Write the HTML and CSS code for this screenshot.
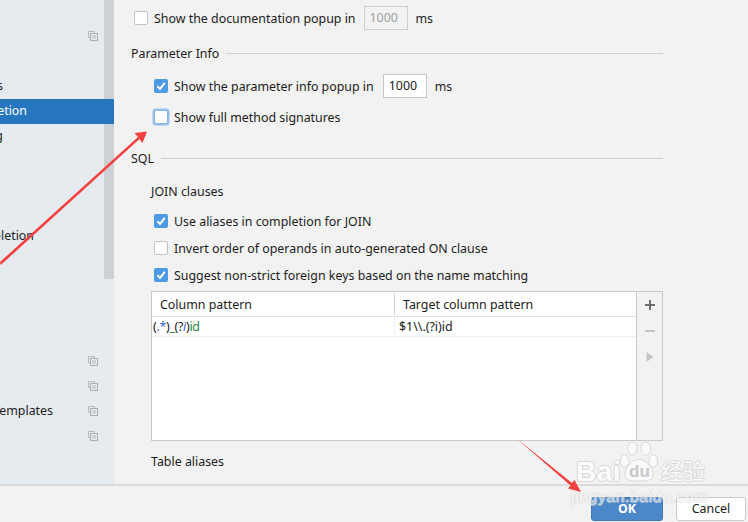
FILE: index.html
```html
<!DOCTYPE html>
<html lang="en">
<head>
<meta charset="utf-8">
<title>Settings</title>
<link rel="stylesheet" href="styles.css">
</head>
<body>
<svg width="0" height="0" class="defs">
  <symbol id="copy" viewBox="0 0 10 10">
    <path d="M.5.5h6v2M.5.5v6h2" fill="none" stroke="#b4b9bd"/>
    <rect x="2.500" y="2.500" width="7" height="7" fill="none" stroke="#a9aeb3"/>
    <path d="M4 5h4M4 7h4" stroke="#b4b9bd"/>
  </symbol>
  <symbol id="tick" viewBox="0 0 14 14">
    <path d="M3.400 7.200 6 9.900 10.800 3.900" fill="none" stroke="#fff" stroke-width="2"/>
  </symbol>
</svg>
<div class="app">
  <div class="main">
    <aside class="sidebar">
      <div class="thumb"></div>
      <div class="tree">
        <div class="node"><svg class="copy"><use href="#copy"/></svg></div>
        <div class="node"></div>
        <div class="node"><span class="label end-3">Inspections</span></div>
        <div class="node selected"><span class="label end-27">Code Completion</span></div>
        <div class="node"><span class="label end-3">Code Folding</span></div>
        <div class="node"></div>
        <div class="node"></div>
        <div class="node"></div>
        <div class="node"><span class="label end-34">Postfix Completion</span></div>
        <div class="node"></div>
        <div class="node"></div>
        <div class="node"></div>
        <div class="node"></div>
        <div class="node"><svg class="copy"><use href="#copy"/></svg></div>
        <div class="node"><svg class="copy"><use href="#copy"/></svg></div>
        <div class="node"><span class="label end-53">Live Templates</span><svg class="copy"><use href="#copy"/></svg></div>
        <div class="node"><svg class="copy"><use href="#copy"/></svg></div>
      </div>
    </aside>
    <section class="content">
      <div class="row row-doc">
        <span class="check"></span><span class="txt">Show the documentation popup in</span>
        <span class="field disabled">1000</span><span class="txt">ms</span>
      </div>
      <div class="heading heading-param"><span class="txt">Parameter Info</span><i class="rule"></i></div>
      <div class="indent">
        <div class="row row-info">
          <span class="check on"><svg><use href="#tick"/></svg></span><span class="txt">Show the parameter info popup in</span>
          <span class="field">1000</span><span class="txt">ms</span>
        </div>
        <div class="row row-full">
          <span class="check focus"></span><span class="txt">Show full method signatures</span>
        </div>
      </div>
      <div class="heading heading-sql"><span class="txt">SQL</span><i class="rule"></i></div>
      <div class="sql">
        <div class="subhead subhead-join"><span class="txt">JOIN clauses</span></div>
        <div class="options">
          <div class="row opt"><span class="check on"><svg><use href="#tick"/></svg></span><span class="txt">Use aliases in completion for JOIN</span></div>
          <div class="row opt"><span class="check"></span><span class="txt">Invert order of operands in auto-generated ON clause</span></div>
          <div class="row opt"><span class="check on"><svg><use href="#tick"/></svg></span><span class="txt">Suggest non-strict foreign keys based on the name matching</span></div>
        </div>
        <div class="table">
          <div class="grid">
            <div class="thead">
              <div class="th col-a"><span class="txt">Column pattern</span></div>
              <div class="th col-b"><span class="txt">Target column pattern</span></div>
            </div>
            <div class="tr">
              <div class="td col-a"><span class="txt"><span class="rx-dark">(</span><span class="rx-blue">.*</span><span class="rx-dark">)</span><span class="rx-green">_</span><span class="rx-dark">(?</span><span class="rx-blue rx-i">i</span><span class="rx-dark">)</span><span class="rx-green">id</span></span></div>
              <div class="td col-b"><span class="txt">$1\\.(?i)id</span></div>
            </div>
          </div>
          <div class="tools">
            <svg class="tool" viewBox="0 0 12 12"><path d="M6 1v10M1 6h10" stroke="#6e6e6e" stroke-width="2"/></svg>
            <svg class="tool" viewBox="0 0 12 12"><path d="M1 6h10" stroke="#c4c4c4" stroke-width="2"/></svg>
            <svg class="tool" viewBox="0 0 12 12"><path d="M2.500 1 9.500 6 2.500 11z" fill="#c4c4c4"/></svg>
          </div>
        </div>
        <div class="subhead subhead-alias"><span class="txt">Table aliases</span></div>
      </div>
    </section>
  </div>
  <footer class="footer">
    <button class="btn ok">OK</button>
    <button class="btn cancel">Cancel</button>
  </footer>
</div>

<div class="watermark">
  <svg class="paw" viewBox="0 0 44 44">
    <g fill="#f9f9f9" stroke="#d6d6d6" stroke-width="1">
      <ellipse cx="7" cy="21" rx="4.500" ry="6.500"/>
      <ellipse cx="15" cy="8" rx="5" ry="7"/>
      <ellipse cx="29" cy="8" rx="5" ry="7"/>
      <ellipse cx="37" cy="21" rx="4.500" ry="6.500"/>
      <path d="M22 19c7 0 15 9 15 16 0 6-6 7-15 7S7 41 7 35c0-7 8-16 15-16z"/>
    </g>
  </svg>
  <span class="wm wm-bai">Bai</span>
  <span class="wm wm-du">du</span>
  <span class="wm wm-cn">经验</span>
  <span class="wm wm-url">jingyan.baidu.com</span>
</div>

<svg class="arrows" viewBox="0 0 748 522">
  <path d="M0 262 138 137 134.500 133 147 131.500 142.500 143 139.500 139 .7 265z" fill="#f4403f"/>
  <path d="M516 438 572 483 574.500 480 581 492 568 488.500 570.500 485.500z" fill="#f4403f"/>
</svg>
</body>
</html>
```

FILE: styles.css
```css
* { box-sizing: border-box; }
html, body { margin: 0; height: 100%; }
body {
  width: 748px;
  height: 522px;
  overflow: hidden;
  position: relative;
  background: #f2f2f2;
  color: #1c1c1c;
  font: 12.4px/1 "Noto Sans", "Noto Sans CJK SC", sans-serif;
}
.defs { position: absolute; }
.app { display: flex; flex-direction: column; height: 522px; }
.main { display: flex; height: 484px; overflow: hidden; }
.txt { padding-top: 2px; }

/* sidebar */
.sidebar {
  position: relative;
  width: 114px;
  flex: none;
  overflow: hidden;
  background: #e6ebf0;
  padding-top: 24px;
}
.thumb {
  position: absolute;
  top: 0;
  right: 0;
  width: 10px;
  height: 279px;
  background: #cdd1d6;
}
.tree { position: relative; display: flex; flex-direction: column; }
.node { position: relative; height: 25px; display: flex; align-items: center; }
.node.selected { background: #2675bf; color: #fff; }
.label { display: flex; justify-content: flex-end; white-space: nowrap; flex: none; }
.end-3 { width: 3px; }
.end-27 { width: 27px; }
.end-34 { width: 34px; }
.end-53 { width: 53px; }
.copy { position: absolute; left: 88px; top: 7px; width: 10px; height: 10px; }

/* content */
.content { flex: 1; padding: 5px 85px 0 17px; min-width: 0; }
.row { display: flex; align-items: center; height: 26px; white-space: nowrap; }
.row-doc { padding-left: 3px; }
.check {
  flex: none;
  width: 14px;
  height: 14px;
  margin-right: 6px;
  background: #fff;
  border: 1px solid #c4c4c4;
  border-radius: 2px;
}
.check svg { display: block; width: 14px; height: 14px; margin: 0; }
.check.on { background: #4d9be6; border: 0; }
.check.focus { border-color: #8ab4e8; box-shadow: 0 0 0 1.500px #97bfee; }
.field {
  width: 44px;
  height: 24px;
  margin: 0 8px;
  padding: 5px 0 0 5px;
  background: #fff;
  border: 1px solid #c6c6c6;
  color: #1c1c1c;
}
.field.disabled { background: #f2f2f2; color: #a0a0a0; border-color: #cfcfcf; }
.row-info .field { margin-left: 9px; }
.heading { display: flex; align-items: center; height: 20px; gap: 7px; }
.heading-param { margin-top: 12px; }
.heading-sql { margin-top: 18px; }
.rule { flex: 1; height: 1px; background: #d0d0d0; }
.indent { padding-left: 23px; }
.row-info { margin-top: 10px; }
.row-full { margin-top: 5px; }
.sql { padding-left: 20px; }
.subhead { height: 20px; display: flex; align-items: center; }
.subhead-join { margin-top: 13px; }
.subhead-alias { margin-top: 10px; }
.options { display: flex; flex-direction: column; gap: 5px; margin-top: 9px; padding-left: 3px; }
.opt { height: 22px; }

/* table */
.table {
  display: flex;
  height: 150px;
  margin-top: 5px;
  background: #fff;
  border: 1px solid #c9c9c9;
}
.grid { flex: 1; min-width: 0; }
.tools {
  width: 26px;
  flex: none;
  background: #f2f2f2;
  border-left: 1px solid #c9c9c9;
  display: flex;
  flex-direction: column;
  align-items: center;
  gap: 14px;
  padding-top: 7px;
}
.tool { display: block; width: 12px; height: 12px; }
.thead { display: flex; height: 25px; border-bottom: 1px solid #e2e2e2; }
.th { display: flex; align-items: center; padding-left: 8px; }
.th.col-b { padding-left: 9px; position: relative; }
.th.col-b::before {
  content: "";
  position: absolute;
  left: 0;
  top: 1px;
  bottom: 1px;
  width: 1px;
  background: #d4d4d4;
}
.col-a { width: 242px; flex: none; }
.col-b { flex: 1; }
.tr { display: flex; height: 20px; border-bottom: 1px solid #f0f0f0; }
.td { display: flex; align-items: center; padding-left: 1px; }
.td.col-a { letter-spacing: -.3px; }
.td.col-b { padding-left: 4px; border-left: 1px solid #f0f0f0; }
.rx-dark { color: #1c1c1c; }
.rx-blue { color: #3d5fe0; }
.rx-i { font-style: italic; }
.rx-green { color: #1a8a3c; }

/* footer */
.footer {
  flex: 1;
  display: flex;
  justify-content: flex-end;
  gap: 13px;
  padding: 11px 2px 0 0;
  border-top: 2px solid #dadada;
}
.btn {
  width: 70px;
  height: 24px;
  padding: 0;
  font: inherit;
  border-radius: 3px;
  border: 1px solid #c9c9c9;
  background: #fff;
  color: #1c1c1c;
}
.btn.ok {
  width: 72px;
  background: #4c87c9;
  border-color: #3f77b5;
  color: #fff;
  font-weight: 700;
}

/* overlays */
.arrows { position: absolute; inset: 0; width: 748px; height: 522px; pointer-events: none; }
.watermark { position: absolute; inset: 0; pointer-events: none; }
.paw { position: absolute; left: 618px; top: 441px; width: 42px; height: 42px; }
.wm {
  position: absolute;
  color: #fbfbfb;
  white-space: nowrap;
  font-family: "Liberation Sans", sans-serif;
  font-weight: 700;
  text-shadow: 1px 0 #d8d8d8, -1px 0 #d8d8d8, 0 1px #d8d8d8, 0 -1px #d8d8d8;
}
.wm-bai { left: 576px; top: 458px; font-size: 28px; letter-spacing: .5px; }
.wm-du { left: 629px; top: 463px; font-size: 17px; color: #c8c8c8; text-shadow: none; }
.wm-cn { left: 661px; top: 458px; font-size: 22px; font-family: "Noto Sans CJK SC", sans-serif; font-weight: 400; }
.wm-url { left: 571px; top: 489px; font-size: 15.500px; font-weight: 400; letter-spacing: .7px; opacity: .65; }
```
